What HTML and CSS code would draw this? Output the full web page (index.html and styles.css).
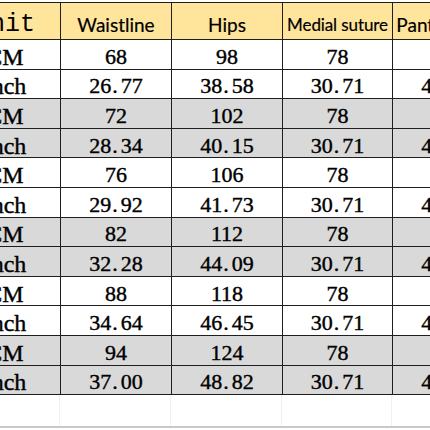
FILE: index.html
```html
<!DOCTYPE html>
<html>
<head>
<meta charset="utf-8">
<link rel="stylesheet" href="styles.css">
</head>
<body>
<div class="frame">
  <table class="size">
    <colgroup>
      <col class="c1"><col class="c2"><col class="c3"><col class="c4"><col class="c5">
    </colgroup>
    <tr class="head">
      <th class="unit">Unit</th><th>Waistline</th><th>Hips</th><th class="tight">Medial suture</th><th>Pants length</th>
    </tr>
    <tr class="w"><td class="u">CM</td><td>68</td><td>98</td><td>78</td><td>104</td></tr>
    <tr class="w"><td class="u">Inch</td><td>26<span class="d">.</span>77</td><td>38<span class="d">.</span>58</td><td>30<span class="d">.</span>71</td><td>40<span class="d">.</span>94</td></tr>
    <tr class="g"><td class="u">CM</td><td>72</td><td>102</td><td>78</td><td>105</td></tr>
    <tr class="g"><td class="u">Inch</td><td>28<span class="d">.</span>34</td><td>40<span class="d">.</span>15</td><td>30<span class="d">.</span>71</td><td>41<span class="d">.</span>34</td></tr>
    <tr class="w"><td class="u">CM</td><td>76</td><td>106</td><td>78</td><td>106</td></tr>
    <tr class="w"><td class="u">Inch</td><td>29<span class="d">.</span>92</td><td>41<span class="d">.</span>73</td><td>30<span class="d">.</span>71</td><td>41<span class="d">.</span>73</td></tr>
    <tr class="g"><td class="u">CM</td><td>82</td><td>112</td><td>78</td><td>107</td></tr>
    <tr class="g"><td class="u">Inch</td><td>32<span class="d">.</span>28</td><td>44<span class="d">.</span>09</td><td>30<span class="d">.</span>71</td><td>42<span class="d">.</span>13</td></tr>
    <tr class="w"><td class="u">CM</td><td>88</td><td>118</td><td>78</td><td>108</td></tr>
    <tr class="w"><td class="u">Inch</td><td>34<span class="d">.</span>64</td><td>46<span class="d">.</span>45</td><td>30<span class="d">.</span>71</td><td>42<span class="d">.</span>52</td></tr>
    <tr class="g"><td class="u">CM</td><td>94</td><td>124</td><td>78</td><td>110</td></tr>
    <tr class="g"><td class="u">Inch</td><td>37<span class="d">.</span>00</td><td>48<span class="d">.</span>82</td><td>30<span class="d">.</span>71</td><td>43<span class="d">.</span>31</td></tr>
  </table>
  <div class="ghost">
    <div class="gc"></div><div class="gc"></div><div class="gc"></div><div class="gc"></div><div class="gc"></div>
  </div>
</div>
</body>
</html>
```
FILE: styles.css
```css
html, body {
  margin: 0;
  padding: 0;
  background: #ffffff;
}
.frame {
  width: 430px;
  height: 430px;
  overflow: hidden;
  padding-top: 2px;
  box-sizing: border-box;
}
.size {
  margin-left: -51px;
  border-collapse: collapse;
  table-layout: fixed;
  width: 554px;
}
.c1, .c2, .c3, .c5 { width: 111px; }
.c4 { width: 110px; }
.size th, .size td {
  border: 1.5px solid #1e1e1e;
  padding: 0;
  text-align: center;
  white-space: nowrap;
  overflow: hidden;
}
.head th {
  height: 37px;
  background: #ffe59b;
  font-family: Lato, "Liberation Sans", sans-serif;
  font-weight: normal;
  font-size: 19px;
  color: #000;
  padding-top: 6px;
  box-sizing: border-box;
  vertical-align: middle;
  -webkit-text-stroke: 0.2px #000;
}
.head th.tight {
  font-size: 17px;
  letter-spacing: -0.1px;
  overflow: visible;
}
.head th.unit {
  font-family: "Liberation Mono", monospace;
  font-size: 25px;
  -webkit-text-stroke: 0;
}
.size td {
  height: 29.6px;
  font-family: "Liberation Serif", serif;
  font-size: 22px;
  color: #000;
  padding-top: 5px;
  box-sizing: border-box;
  line-height: 22px;
  vertical-align: middle;
  -webkit-text-stroke: 0.4px #000;
}
.size td.u {
  font-size: 24px;
}
.d {
  margin: 0 3px 0 1px;
}
.w td { background: #ffffff; }
.g td { background: #d9d9d9; }
.ghost {
  margin-left: -51px;
  display: grid;
  grid-template-columns: 111px 111px 111px 110px 111px;
  height: 31px;
  border-bottom: 2px solid #c9c9c9;
}
.gc {
  border-right: 1px solid #f0f0f0;
}
```
